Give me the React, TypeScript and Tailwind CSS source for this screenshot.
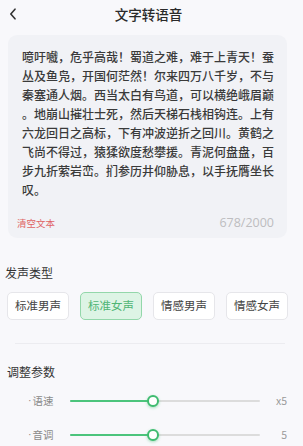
import React from "react";

const lines = [
  "噫吁嚱，危乎高哉！蜀道之难，难于上青天！蚕",
  "丛及鱼凫，开国何茫然！尔来四万八千岁，不与",
  "秦塞通人烟。西当太白有鸟道，可以横绝峨眉巅",
  "。地崩山摧壮士死，然后天梯石栈相钩连。上有",
  "六龙回日之高标，下有冲波逆折之回川。黄鹤之",
  "飞尚不得过，猿猱欲度愁攀援。青泥何盘盘，百",
  "步九折萦岩峦。扪参历井仰胁息，以手抚膺坐长",
  "叹。",
];

const voices = ["标准男声", "标准女声", "情感男声", "情感女声"];

function SliderRow({ label, value }: { label: string; value: string }) {
  return (
    <div className="flex h-[20px] items-center pl-[28px]">
      <div className="flex w-[42px] items-center text-[10.5px] text-[#8a8a8a]">
        <span className="mr-[1px]" style={{ fontFamily: '"Liberation Sans", sans-serif' }}>·</span>
        <span>{label}</span>
      </div>
      <div className="relative h-[2px] w-[190px] rounded-full bg-[#dcdcdc]">
        <div className="absolute left-0 top-0 h-[2px] w-[83px] rounded-full bg-[#4cc47c]" />
        <div className="absolute left-[77px] top-[-5px] h-[12px] w-[12px] rounded-full border-[2.5px] border-[#3fbb70] bg-white shadow-[0_1px_3px_rgba(60,190,110,0.45)]" />
      </div>
      <div className="w-[27px] text-right text-[10.5px] text-[#9a9a9a]">{value}</div>
    </div>
  );
}

export default function App() {
  return (
    <div
      className="h-[446px] w-[303px] overflow-hidden bg-[#f8f8fb]"
      style={{ fontFamily: '"Noto Sans CJK SC", "Noto Sans", sans-serif' }}
    >
      <div className="relative flex h-[28px] items-center justify-center pr-[6px]">
        <svg
          className="absolute left-[9px] top-[8px]"
          width="8"
          height="12"
          viewBox="0 0 8 12"
          fill="none"
        >
          <path d="M6 1.2 L1.8 6 L6 10.8" stroke="#333" strokeWidth="1.6" strokeLinecap="round" strokeLinejoin="round" />
        </svg>
        <span className="text-[13.5px] font-medium text-[#2a2a2a]">文字转语音</span>
      </div>

      <div className="ml-[8px] mt-[7px] w-[279px] rounded-[9px] bg-[#f1f2f6] pb-[7px] pl-[14px] pr-[13px] pt-[12px]">
        {lines.map((l, i) => (
          <div
            key={i}
            className={
              "w-[252px] whitespace-nowrap text-[12px] font-medium leading-[19px] text-[#3a3a3a] " +
              (i < lines.length - 1 ? "[text-align-last:justify]" : "")
            }
          >
            {l}
          </div>
        ))}
        <div className="-ml-[5px] mt-[16px] flex h-[16px] items-center justify-between">
          <span className="text-[9.5px] text-[#e06464]">清空文本</span>
          <span className="text-[12.5px] text-[#bdbdc0]" style={{ fontFamily: '"Open Sans", "Noto Sans", sans-serif' }}>
            678/2000
          </span>
        </div>
      </div>

      <div className="ml-[5px] mt-[27px] text-[12px] leading-[16px] text-[#333]">发声类型</div>

      <div className="ml-[7px] mt-[11px] flex gap-[11px]">
        {voices.map((v, i) => (
          <div
            key={v}
            className={
              "flex h-[28px] w-[62px] items-center justify-center rounded-[5px] border text-[11.5px] " +
              (i === 1
                ? "border-[#93d7aa] bg-[#ddf4e5] text-[#4fb574]"
                : "border-[#e6e6ea] bg-white text-[#444]")
            }
          >
            {v}
          </div>
        ))}
      </div>

      <div className="ml-[15px] mt-[23px] h-px w-[270px] bg-[#ececf0]" />

      <div className="ml-[7px] mt-[20px] text-[12px] leading-[16px] text-[#333]">调整参数</div>

      <div className="mt-[11px] flex flex-col gap-[14px]">
        <SliderRow label="语速" value="x5" />
        <SliderRow label="音调" value="5" />
      </div>
    </div>
  );
}
